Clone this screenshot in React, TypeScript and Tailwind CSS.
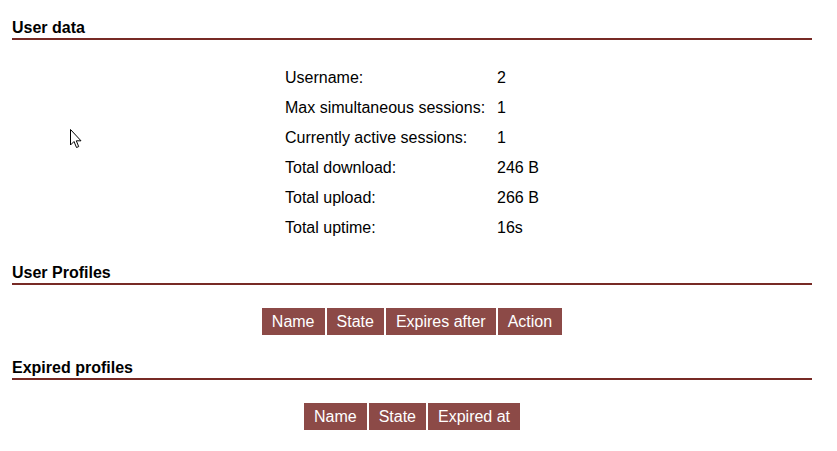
import React from 'react';

const userData: [string, string][] = [
  ['Username:', '2'],
  ['Max simultaneous sessions:', '1'],
  ['Currently active sessions:', '1'],
  ['Total download:', '246 B'],
  ['Total upload:', '266 B'],
  ['Total uptime:', '16s'],
];

const SectionTitle: React.FC<{ title: string; className?: string }> = ({ title, className = '' }) => (
  <div className={`font-bold text-[16px] leading-[18px] pb-[1px] border-b-2 border-[#772a25] text-black ${className}`}>
    {title}
  </div>
);

const HeaderRow: React.FC<{ cols: string[]; className?: string }> = ({ cols, className = '' }) => (
  <div className={`flex justify-center gap-[2px] ${className}`}>
    {cols.map((c) => (
      <div key={c} className="bg-[#8c4a47] text-white text-[16px] leading-[18px] h-[27px] px-[10px] flex items-center">
        {c}
      </div>
    ))}
  </div>
);

const Cursor: React.FC = () => (
  <svg className="absolute left-[70px] top-[129px]" width="13" height="20" viewBox="0 0 13 20">
    <path
      d="M0.5 0.5 L0.5 16 L4 12.5 L6.5 18.5 L8.7 17.6 L6.3 11.8 L11 11.8 Z"
      fill="#fff"
      stroke="#000"
      strokeWidth="1"
      strokeLinejoin="miter"
    />
  </svg>
);

const App: React.FC = () => {
  return (
    <div className="relative w-[837px] h-[451px] bg-white overflow-hidden" style={{ fontFamily: '"Liberation Sans", Arial, sans-serif' }}>
      <div className="ml-[12px] w-[800px] pt-[19px]">
        <SectionTitle title="User data" />

        <div className="mt-[23px] flex justify-center">
          <div className="grid grid-cols-[212px_46px] text-[16px] leading-[18px] text-black">
            {userData.map(([label, value]) => (
              <React.Fragment key={label}>
                <div className="h-[30px] flex items-center pl-[2px] whitespace-nowrap">{label}</div>
                <div className="h-[30px] flex items-center pl-[2px] whitespace-nowrap">{value}</div>
              </React.Fragment>
            ))}
          </div>
        </div>

        <SectionTitle title="User Profiles" className="mt-[21px]" />
        <HeaderRow cols={['Name', 'State', 'Expires after', 'Action']} className="mt-[23px]" />

        <SectionTitle title="Expired profiles" className="mt-[24px]" />
        <HeaderRow cols={['Name', 'State', 'Expired at']} className="mt-[23px]" />
      </div>
      <Cursor />
    </div>
  );
};

export default App;
